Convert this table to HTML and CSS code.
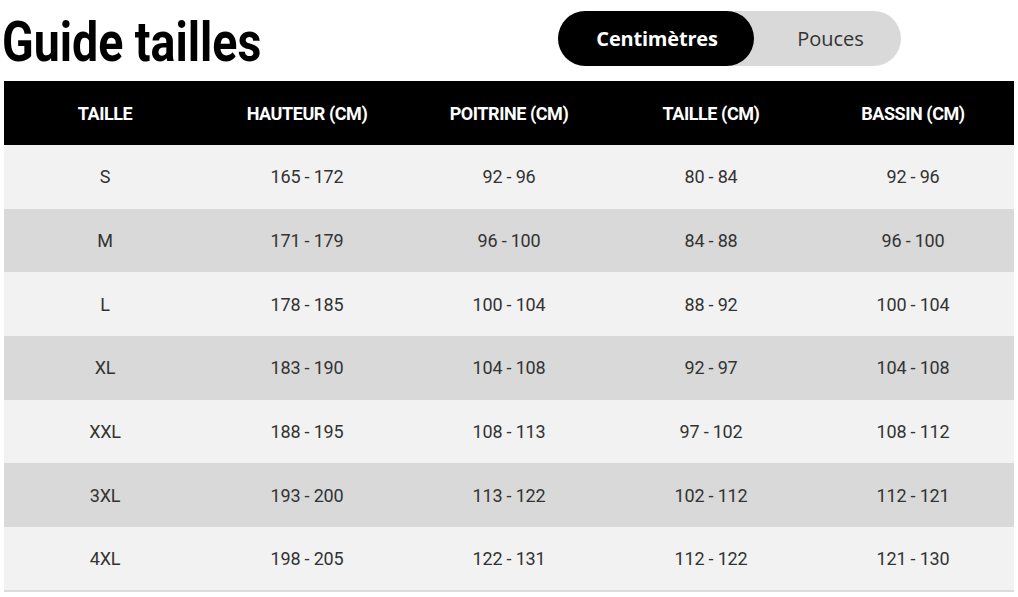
FILE: index.html
```html
<!DOCTYPE html>
<html lang="fr">
<head>
<meta charset="utf-8">
<title>Guide tailles</title>
<link rel="stylesheet" href="styles.css">
</head>
<body>
<div class="page">
  <div class="top">
    <h1 class="title">Guide tailles</h1>
    <div class="toggle">
      <span class="opt active">Centimètres</span>
      <span class="opt">Pouces</span>
    </div>
  </div>
  <table class="sizes">
    <thead>
      <tr><th>TAILLE</th><th>HAUTEUR (CM)</th><th>POITRINE (CM)</th><th>TAILLE (CM)</th><th>BASSIN (CM)</th></tr>
    </thead>
    <tbody>
      <tr><td>S</td><td>165 - 172</td><td>92 - 96</td><td>80 - 84</td><td>92 - 96</td></tr>
      <tr><td>M</td><td>171 - 179</td><td>96 - 100</td><td>84 - 88</td><td>96 - 100</td></tr>
      <tr><td>L</td><td>178 - 185</td><td>100 - 104</td><td>88 - 92</td><td>100 - 104</td></tr>
      <tr><td>XL</td><td>183 - 190</td><td>104 - 108</td><td>92 - 97</td><td>104 - 108</td></tr>
      <tr><td>XXL</td><td>188 - 195</td><td>108 - 113</td><td>97 - 102</td><td>108 - 112</td></tr>
      <tr><td>3XL</td><td>193 - 200</td><td>113 - 122</td><td>102 - 112</td><td>112 - 121</td></tr>
      <tr><td>4XL</td><td>198 - 205</td><td>122 - 131</td><td>112 - 122</td><td>121 - 130</td></tr>
    </tbody>
  </table>
</div>
</body>
</html>
```

FILE: styles.css
```css
* { box-sizing: border-box; }
html, body { margin: 0; padding: 0; background: #fff; }
body { font-family: Roboto, "Liberation Sans", sans-serif; color: #333; }
.page { padding: 0 4px; width: 1018px; }
.top {
  display: flex;
  align-items: flex-start;
  height: 81px;
}
.title {
  margin: 0;
  margin-left: -2px;
  padding-top: 10px;
  font-family: Roboto, sans-serif;
  font-weight: 700;
  font-size: 56px;
  line-height: 64px;
  color: #000;
  transform: scaleX(0.83);
  transform-origin: left center;
  white-space: nowrap;
  width: 556px;
}
.toggle {
  margin-top: 11px;
  display: flex;
  width: 343px;
  height: 55px;
  border-radius: 28px;
  background: #d9d9d9;
}
.opt {
  display: flex;
  align-items: center;
  justify-content: center;
  font-family: "Open Sans", sans-serif;
  font-size: 20px;
  color: #333;
  flex: 1;
  padding-left: 6px;
}
.opt.active {
  flex: 0 0 196px;
  padding-left: 2px;
  background: #000;
  color: #fff;
  font-weight: 700;
  letter-spacing: -0.2px;
  border-radius: 28px;
}
.sizes {
  width: 1010px;
  border-collapse: collapse;
  table-layout: fixed;
  border-bottom: 2px solid #dcdcdc;
}
.sizes th {
  background: #000;
  color: #fff;
  height: 64px;
  font-size: 18px;
  font-weight: 700;
  letter-spacing: -0.45px;
  text-align: center;
  padding: 0;
}
.sizes td {
  height: 63.7px;
  text-align: center;
  font-size: 18px;
  letter-spacing: -0.2px;
  color: #333;
  padding: 0;
}
.sizes tbody tr:nth-child(odd) td { background: #f2f2f2; }
.sizes tbody tr:nth-child(even) td { background: #d9d9d9; }
```
